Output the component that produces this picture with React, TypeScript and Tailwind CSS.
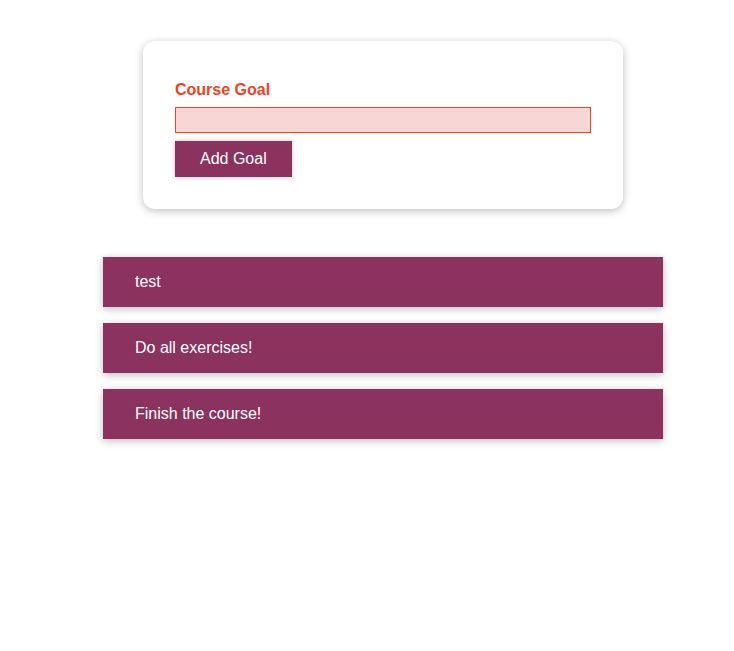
const goals = [
  { id: 'g3', text: 'test' },
  { id: 'g1', text: 'Do all exercises!' },
  { id: 'g2', text: 'Finish the course!' },
];

export default function App() {
  return (
    <div className="bg-white pt-[41px] pl-8 font-['Liberation_Sans',Arial,sans-serif] text-base">
      {/* Goal form */}
      <section className="mx-auto w-[480px] rounded-xl bg-white p-8 shadow-[0_2px_8px_rgba(0,0,0,0.26)]">
        <form onSubmit={(e) => e.preventDefault()}>
          <div className="my-2">
            <label className="mb-2 block leading-[normal] font-bold text-[#f1431f]">Course Goal</label>
            <input
              type="text"
              className="block w-full border border-[#f1431f] bg-[#f9d6d6] px-1 leading-6 outline-none"
            />
          </div>
          <button
            type="submit"
            className="border border-[#8b325e] bg-[#8b325e] px-6 py-[7px] leading-5 text-white shadow-[0_0_4px_rgba(0,0,0,0.26)]"
          >
            Add Goal
          </button>
        </form>
      </section>

      {/* Goal list */}
      <ul className="mx-auto mt-12 w-[560px]">
        {goals.map((goal) => (
          <li
            key={goal.id}
            className="mb-4 bg-[#8b325e] px-8 py-4 leading-[normal] text-white shadow-[0_2px_8px_rgba(0,0,0,0.26)]"
          >
            {goal.text}
          </li>
        ))}
      </ul>
    </div>
  );
}
